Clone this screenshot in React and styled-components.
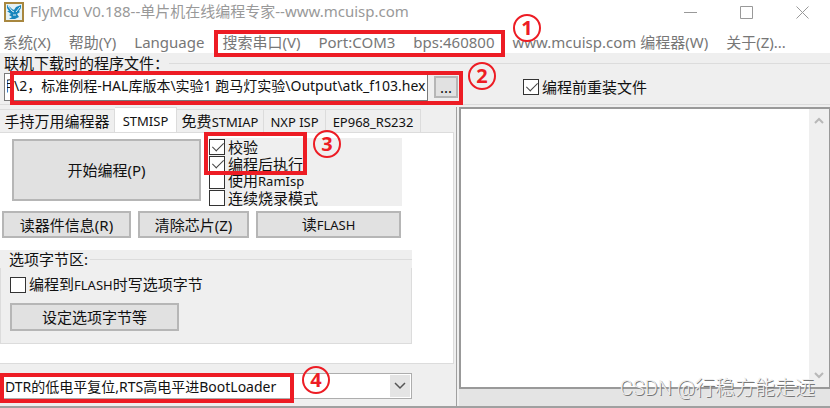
import React, { useState } from 'react';
import styled, { createGlobalStyle } from 'styled-components';

const GlobalStyle = createGlobalStyle`
  * {
    box-sizing: border-box;
  }

  body {
    margin: 0;
    background: #efefef;
  }

  body, button, input, select, textarea {
    font-family: "Noto Sans", "Noto Sans CJK SC", sans-serif;
  }
`;

const menuItems = ['系统(X)', '帮助(Y)', 'Language', '搜索串口(V)', 'Port:COM3', 'bps:460800', 'www.mcuisp.com 编程器(W)', '关于(Z)...'];

const tabs = [
    { name: '手持万用编程器', width: 115 },
    { name: 'STMISP', width: 62 },
    { name: '免费STMIAP', width: 87 },
    { name: 'NXP ISP', width: 62 },
    { name: 'EP968_RS232', width: 95 }
];

const marks = [
    { id: 1, top: 30, left: 214, width: 291, height: 27, badgeTop: 14, badgeLeft: 513 },
    { id: 2, top: 71, left: 10, width: 453, height: 34, badgeTop: 62, badgeLeft: 468 },
    { id: 3, top: 132, left: 204, width: 103, height: 43, badgeTop: 130, badgeLeft: 313 },
    { id: 4, top: 373, left: 0, width: 294, height: 30, badgeTop: 366, badgeLeft: 302 }
];

// latin runs are set smaller than the chinese text around them
const Mixed = ({ text }) =>
    text.split(/([\x20-\x7e]+)/).map((part, i) => (i % 2 ? <Latin key={i}>{part}</Latin> : part));

const Check = ({ label, checked }) => {
    const [on, setOn] = useState(!!checked);

    return (
        <CheckLabel>
            <CheckBox type="checkbox" checked={on} onChange={() => setOn(!on)} />
            <span><Mixed text={label} /></span>
        </CheckLabel>
    );
};

const Logo = () => (
    <svg width="20" height="20" viewBox="0 0 20 20" aria-hidden="true">
        <rect x="1" y="1" width="18" height="18" fill="#e4f1f5" stroke="#a8873f" strokeWidth="2" />
        <path d="M3 3 L6 5 L8 7 L10 8 L12 5 L17 3 L17 6 L15 9 L16 10 L13 12 L15 15 L11 17 L5 17 L8 15 L5 13 L7 12 L3 9 L5 9 L3 6 Z" fill="#1686bd" />
        <path d="M4 4 L8 9 L10 10 M12 10 L16 5 M9 13 L12 13" stroke="#e4f1f5" fill="none" />
    </svg>
);

const App = () => {
    const [active, setActive] = useState('STMISP');
    const [path, setPath] = useState('手\\2，标准例程-HAL库版本\\实验1 跑马灯实验\\Output\\atk_f103.hex');

    return (
        <Window>
            <GlobalStyle />
            <TitleBar>
                <Logo />
                <Title>FlyMcu V0.188--单片机在线编程专家--www.mcuisp.com</Title>
                <Controls>
                    <ControlButton aria-label="Minimize">
                        <svg width="13" height="13"><path d="M0 6.5 H13" /></svg>
                    </ControlButton>
                    <ControlButton aria-label="Maximize">
                        <svg width="13" height="13"><path d="M.5 .5 H12.5 V12.5 H.5 Z" /></svg>
                    </ControlButton>
                    <ControlButton aria-label="Close">
                        <svg width="13" height="13"><path d="M.5 .5 L12.5 12.5 M12.5 .5 L.5 12.5" /></svg>
                    </ControlButton>
                </Controls>
            </TitleBar>
            <MenuBar>
                {menuItems.map((item) => (
                    <MenuItem key={item}>{item}</MenuItem>
                ))}
            </MenuBar>

            <FileGroup>
                <FileLegend htmlFor="path">联机下载时的程序文件：</FileLegend>
                <FileRow>
                    <PathInput id="path" value={path} onChange={(e) => setPath(e.target.value)} />
                    <BrowseButton>...</BrowseButton>
                    <Check label="编程前重装文件" checked />
                </FileRow>
            </FileGroup>

            <Body>
                <Left>
                    <TabList role="tablist">
                        {tabs.map((tab) => (
                            <Tab
                                key={tab.name}
                                role="tab"
                                $width={tab.width}
                                $active={tab.name === active}
                                aria-selected={tab.name === active}
                                onClick={() => setActive(tab.name)}
                            >
                                <Mixed text={tab.name} />
                            </Tab>
                        ))}
                    </TabList>
                    <Panel>
                        <ProgramRow>
                            <StartButton>开始编程(P)</StartButton>
                            <Options>
                                <Check label="校验" checked />
                                <Check label="编程后执行" checked />
                                <Check label="使用RamIsp" />
                                <Check label="连续烧录模式" />
                            </Options>
                        </ProgramRow>
                        <ButtonRow>
                            <PushButton>读器件信息(R)</PushButton>
                            <PushButton>清除芯片(Z)</PushButton>
                            <PushButton><Mixed text="读FLASH" /></PushButton>
                        </ButtonRow>
                        <OptionBytes>
                            <OptionTitle>选项字节区:</OptionTitle>
                            <OptionBody>
                                <Check label="编程到FLASH时写选项字节" />
                                <OptionButton>设定选项字节等</OptionButton>
                            </OptionBody>
                        </OptionBytes>
                    </Panel>
                    <SelectWrap>
                        <BootSelect aria-label="BootLoader">
                            <option>DTR的低电平复位,RTS高电平进BootLoader</option>
                        </BootSelect>
                        <SelectArrow>
                            <svg width="12" height="8"><path d="M1 1 L6 6 L11 1" fill="none" stroke="#555" strokeWidth="1.5" /></svg>
                        </SelectArrow>
                    </SelectWrap>
                </Left>
                <Right>
                    <LogRow>
                        <Log aria-label="Log" readOnly />
                        <ScrollBar>
                            <svg width="10" height="8"><path d="M1 6 L5 2 L9 6" /></svg>
                            <svg width="10" height="8"><path d="M1 2 L5 6 L9 2" /></svg>
                        </ScrollBar>
                    </LogRow>
                    <StatusStrip />
                </Right>
            </Body>

            {marks.map((mark) => (
                <React.Fragment key={mark.id}>
                    <MarkBox $mark={mark} />
                    <MarkBadge $top={mark.badgeTop} $left={mark.badgeLeft}>{mark.id}</MarkBadge>
                </React.Fragment>
            ))}
            <Watermark>CSDN @行稳方能走远</Watermark>
        </Window>
    );
};

const Window = styled.div`
  position: relative;
  display: flex;
  flex-direction: column;
  min-height: 100vh;
  overflow: hidden;
  background: #efefef;
  color: #111;
  font-size: 15px;
  line-height: 18px;
  border-bottom: 2px solid #a0a0a0;
`;

const Latin = styled.span`
  font-size: 13px;
`;

const TitleBar = styled.header`
  display: flex;
  align-items: center;
  height: 24px;
  padding-left: 4px;
  background: #fff;
`;

const Title = styled.h1`
  flex: 1;
  margin: 0 0 0 6px;
  padding-bottom: 2px;
  font-size: 15px;
  font-weight: 400;
  color: #999;
  white-space: nowrap;
`;

const Controls = styled.div`
  display: flex;
`;

const ControlButton = styled.button`
  display: flex;
  align-items: center;
  justify-content: center;
  width: 56px;
  height: 24px;
  padding: 0;
  border: none;
  background: none;

  svg {
    fill: none;
    stroke: #999;
  }
`;

const MenuBar = styled.nav`
  display: flex;
  gap: 18px;
  align-items: center;
  height: 29px;
  padding: 7px 3px 0;
  background: #fff;
`;

const MenuItem = styled.button`
  padding: 0;
  border: none;
  background: none;
  color: #777;
  font-size: 15px;
  line-height: 18px;
  white-space: nowrap;
`;

const FileGroup = styled.section`
  height: 52px;
  border-bottom: 1px solid #dcdcdc;
`;

const FileLegend = styled.label`
  display: flex;
  align-items: center;
  height: 20px;
  padding-left: 4px;
  white-space: nowrap;

  &::after {
    content: '';
    flex: 1;
    height: 1px;
    background: #dcdcdc;
  }
`;

const FileRow = styled.div`
  display: flex;
  align-items: center;
  height: 28px;
  padding-left: 4px;
`;

const PathInput = styled.input`
  width: 424px;
  height: 28px;
  padding: 0 0 4px 2px;
  border: 1px solid #7a7a7a;
  background: #fff;
  color: #111;
  font-size: 14px;
  text-indent: -7px;
`;

const PushButton = styled.button`
  height: 27px;
  padding: 0;
  border: 2px solid #b6b6b6;
  background: #e1e1e1;
  color: #111;
  font-size: 15px;
  line-height: 18px;
  white-space: nowrap;
`;

const BrowseButton = styled(PushButton)`
  width: 24px;
  height: 22px;
  margin: 0 65px 0 6px;
`;

const CheckLabel = styled.label`
  display: flex;
  align-items: center;
  gap: 3px;
  line-height: 16px;
  white-space: nowrap;
`;

const CheckBox = styled.input`
  appearance: none;
  flex: none;
  position: relative;
  width: 16px;
  height: 16px;
  margin: 0;
  border: 1px solid #333;
  background: #fff;

  &:checked::after {
    content: '';
    position: absolute;
    top: 0;
    left: 5px;
    width: 5px;
    height: 10px;
    border: solid #444;
    border-width: 0 1px 1px 0;
    transform: rotate(45deg);
  }
`;

const Body = styled.main`
  display: flex;
  flex: 1;
  gap: 2px;
  padding-top: 2px;
`;

const Left = styled.div`
  flex: none;
  display: flex;
  flex-direction: column;
  width: 457px;
  border-right: 1px solid #a0a0a0;
`;

const TabList = styled.div`
  display: flex;
  align-items: flex-end;
  height: 25px;
`;

const Tab = styled.button`
  width: ${({ $width }) => $width}px;
  height: ${({ $active }) => ($active ? 26 : 23)}px;
  margin-bottom: ${({ $active }) => ($active ? -1 : 0)}px;
  padding: 0;
  border: 1px solid #dcdcdc;
  border-left-width: 0;
  border-bottom: none;
  background: ${({ $active }) => ($active ? '#fff' : '#efefef')};
  color: #111;
  font-size: 15px;
  line-height: 18px;
  white-space: nowrap;
`;

const Panel = styled.div`
  flex: 1;
  margin-right: 2px;
  padding-top: 5px;
  border: 1px solid #dcdcdc;
  border-left: none;
  background: #fff;
`;

const ProgramRow = styled.div`
  display: flex;
  gap: 8px;
  width: 402px;
  padding-left: 12px;
`;

const StartButton = styled(PushButton)`
  width: 189px;
  height: 62px;
  margin-top: 1px;
`;

const Options = styled.div`
  flex: 1;
  display: grid;
  grid-template-rows: repeat(4, 17px);
  background: #efefef;
`;

const ButtonRow = styled.div`
  display: grid;
  grid-template-columns: 129px 111px 145px;
  gap: 7px;
  padding: 5px 0 12px 2px;
`;

const OptionBytes = styled.section`
  width: 412px;
  background: #efefef;
`;

const OptionTitle = styled.h2`
  display: flex;
  align-items: center;
  height: 18px;
  margin: 0;
  padding-left: 9px;
  font-size: 15px;
  font-weight: 400;

  &::after {
    content: '';
    flex: 1;
    height: 1px;
    margin-left: 2px;
    background: #dcdcdc;
  }
`;

const OptionBody = styled.div`
  display: flex;
  flex-direction: column;
  gap: 10px;
  height: 76px;
  padding: 8px 9px;
  border: 1px solid #dcdcdc;
  border-top: none;
`;

const OptionButton = styled(PushButton)`
  width: 169px;
  height: 28px;
`;

const SelectWrap = styled.div`
  position: relative;
  width: 412px;
  margin: 9px 0 7px;
`;

const BootSelect = styled.select`
  appearance: none;
  display: block;
  width: 100%;
  height: 26px;
  padding: 0 28px 0 4px;
  border: 1px solid #adadad;
  border-radius: 0;
  background: #fff;
  color: #111;
  font-size: 14px;
`;

const SelectArrow = styled.span`
  position: absolute;
  top: 2px;
  right: 2px;
  bottom: 2px;
  display: flex;
  align-items: center;
  justify-content: center;
  width: 20px;
  background: #e4e4e4;
  pointer-events: none;
`;

const Right = styled.div`
  flex: 1;
  display: flex;
  flex-direction: column;
`;

const LogRow = styled.div`
  flex: 1;
  display: flex;
  border: 2px solid #999;
  border-right-width: 1px;
`;

const Log = styled.textarea`
  flex: 1;
  min-width: 0;
  padding: 4px;
  border: none;
  background: #fff;
  resize: none;
`;

const ScrollBar = styled.div`
  display: flex;
  flex-direction: column;
  align-items: center;
  justify-content: space-between;
  width: 20px;
  padding: 8px 0;
  background: #efefef;

  svg {
    fill: none;
    stroke: #b8b8b8;
    stroke-width: 2;
  }
`;

const StatusStrip = styled.div`
  height: 17px;
  background: #e4e4e4;
`;

const MarkBox = styled.div`
  position: absolute;
  top: ${({ $mark }) => $mark.top}px;
  left: ${({ $mark }) => $mark.left}px;
  width: ${({ $mark }) => $mark.width}px;
  height: ${({ $mark }) => $mark.height}px;
  border: 4px solid #ed1c24;
  pointer-events: none;
`;

const MarkBadge = styled.span`
  position: absolute;
  top: ${({ $top }) => $top}px;
  left: ${({ $left }) => $left}px;
  display: flex;
  align-items: center;
  justify-content: center;
  width: 28px;
  height: 28px;
  border: 2px solid #ed1c24;
  border-radius: 50%;
  color: #ed1c24;
  font-size: 20px;
  font-weight: 700;
  pointer-events: none;
`;

const Watermark = styled.span`
  position: absolute;
  right: 15px;
  bottom: 6px;
  color: #efefef;
  font-family: Roboto, "Noto Sans CJK SC", sans-serif;
  font-size: 20px;
  font-weight: 300;
  line-height: 24px;
  text-shadow: 1px 1px 0 #777;
  pointer-events: none;
`;

export default App;
